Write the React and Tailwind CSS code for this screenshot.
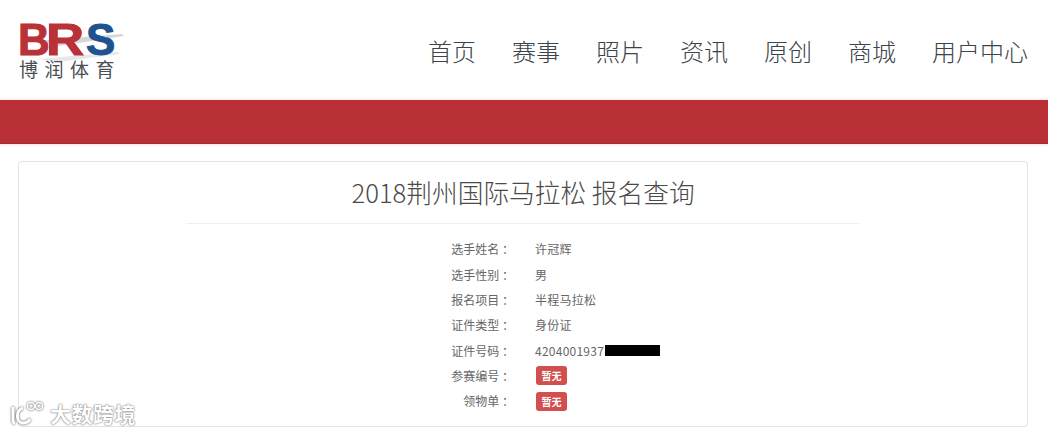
const navItems = ['首页', '赛事', '照片', '资讯', '原创', '商城', '用户中心']

const rows = [
  { label: '选手姓名 ：', value: '许冠辉' },
  { label: '选手性别 ：', value: '男' },
  { label: '报名项目 ：', value: '半程马拉松' },
  { label: '证件类型 ：', value: '身份证' },
  { label: '证件号码 ：', value: '4204001937', masked: true },
  { label: '参赛编号 ：', badge: '暂无' },
  { label: '领物单 ：', badge: '暂无' },
]

function Logo() {
  return (
    <div className="relative h-[58px] w-[107px]">
      <svg width="107" height="40" viewBox="0 0 107 40" className="absolute left-0 top-0">
        <path d="M28 17 L104 11 L106 13 L34 24 Z" fill="#d4d6d8" />
        <path d="M20 36 L100 29 L102 31 L40 39 Z" fill="#e6e7e8" />
      </svg>
      <div className="relative flex h-[33px] items-center font-['Liberation_Sans',sans-serif] text-[44px] font-bold leading-[33px]">
        <span className="w-[28px] text-[#b83237] [-webkit-text-stroke:1px_#b83237]">B</span>
        <span className="w-[40px] origin-left scale-x-[1.2] text-[#b83237] [-webkit-text-stroke:1px_#b83237]">R</span>
        <span className="text-[#1f5291] [-webkit-text-stroke:1px_#1f5291]">S</span>
      </div>
      <div className="relative mt-[3px] pl-[1px] text-[19px] leading-[20px] tracking-[6.5px] text-[#4a4f54]">博润体育</div>
    </div>
  )
}

function Watermark() {
  return (
    <div className="absolute left-[9px] top-[400px] flex items-center gap-[3px] text-white [text-shadow:0_0_2px_#777,0_0_1px_#777]">
      <svg width="38" height="26" viewBox="0 0 38 26" fill="none" stroke="#fff" strokeWidth="3" className="[filter:drop-shadow(0_0_1px_#444)]">
        <path d="M4 7 V20 C4 22 5 23 6 23" />
        <path d="M14 8 C6 10 7 23 14 23 C18 23 20 21 21 19" />
        <circle cx="22" cy="6" r="3.5" strokeWidth="1.5" />
        <circle cx="30" cy="6" r="3.5" strokeWidth="1.5" />
      </svg>
      <span className="text-[21px] font-bold leading-[26px] tracking-[0.5px]">大数跨境</span>
    </div>
  )
}

export default function App() {
  return (
    <div className="relative h-[433px] w-[1048px] overflow-hidden bg-white font-['Noto_Sans_CJK_SC',sans-serif]">
      <header className="flex h-[100px] items-start justify-between border-b-2 border-[#fdf0f0] pl-[18px] pr-[20px]">
        <div className="pt-[23px]">
          <Logo />
        </div>
        <nav className="flex gap-[36px] pt-[33px]">
          {navItems.map((item) => (
            <a key={item} className="text-[24px] font-light leading-[36px] text-[#3c4349]">
              {item}
            </a>
          ))}
        </nav>
      </header>

      <div className="h-[44px] border-b border-[#a32c30] bg-[#b83035]" />
      <div className="h-[2px] bg-[#fdeeee]" />

      <main className="px-[18px] pt-[15px]">
        <section className="h-[266px] w-[1010px] rounded-[4px] border border-[#e2e2e2] bg-white">
          <h1 className="pt-[11px] text-center text-[25.7px] font-light leading-[38px] text-[#4a4a4a]">
            2018荆州国际马拉松 报名查询
          </h1>
          <hr className="mx-auto mt-[12px] w-[672px] border-[#eeeeee]" />
          <dl className="pt-[12.5px]">
            {rows.map((row) => (
              <div key={row.label} className="flex h-[25.35px] items-center text-[12px] text-[#666]">
                <dt className="w-[495px] whitespace-pre text-right">{row.label}</dt>
                <dd className="ml-[21px] flex items-center">
                  {row.value && <span className="tracking-[0.25px]">{row.value}</span>}
                  {row.masked && <span className="ml-[1px] h-[11px] w-[55px] bg-black" />}
                  {row.badge && (
                    <span className="ml-[1px] flex h-[19px] w-[31px] items-center justify-center rounded-[3px] bg-[#d14f4f] text-[10px] font-bold text-white">
                      {row.badge}
                    </span>
                  )}
                </dd>
              </div>
            ))}
          </dl>
        </section>
      </main>

      <Watermark />
    </div>
  )
}
